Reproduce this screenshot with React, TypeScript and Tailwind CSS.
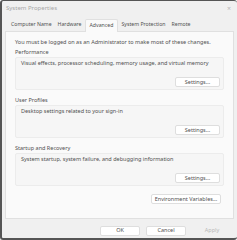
const tabs = ["Computer Name", "Hardware", "Advanced", "System Protection", "Remote"];

type Group = {
  title: string;
  description: string;
};

const groups: Group[] = [
  {
    title: "Performance",
    description: "Visual effects, processor scheduling, memory usage, and virtual memory",
  },
  {
    title: "User Profiles",
    description: "Desktop settings related to your sign-in",
  },
  {
    title: "Startup and Recovery",
    description: "System startup, system failure, and debugging information",
  },
];

function SmallButton({ label, className = "" }: { label: string; className?: string }) {
  return (
    <button
      type="button"
      className={`flex h-[10px] items-center justify-center rounded-[2px] border border-[#dedede] bg-white text-[5.5px] text-[#505050] ${className}`}
    >
      {label}
    </button>
  );
}

export default function App() {
  return (
    <div
      className="flex h-[240px] w-[237px] flex-col overflow-hidden rounded-[3px] border-b-2 border-l-2 border-t border-[#555] bg-[#f0f0f0] text-[#505050]"
      style={{ fontFamily: '"Noto Sans", "Open Sans", sans-serif' }}
    >
      <div className="flex h-[17px] shrink-0 items-center justify-between pb-[2px] pl-[4px] pr-[6px]">
        <span className="text-[6px] text-[#a8a8a8]">System Properties</span>
        <span className="text-[7px] leading-none text-[#b5b5b5]">×</span>
      </div>

      <div className="flex h-[13px] shrink-0 items-end pl-[6px]">
        {tabs.map((tab) => (
          <div
            key={tab}
            className={
              tab === "Advanced"
                ? "relative z-10 -mb-px flex h-[13px] items-center rounded-t-[2px] border border-b-0 border-[#e0e0e0] bg-[#fafafa] px-[4px] text-[5.2px]"
                : "flex h-[12px] items-center px-[3px] text-[5.2px]"
            }
          >
            {tab}
          </div>
        ))}
      </div>

      <div className="mx-[3px] flex h-[188px] shrink-0 flex-col border border-[#e0e0e0] bg-[#fafafa] px-[9px] pt-[7px]">
        <p className="text-[5.5px] leading-[7px]">
          You must be logged on as an Administrator to make most of these changes.
        </p>

        <div className="mt-[3px] flex flex-col gap-[7px]">
          {groups.map((group) => (
            <div key={group.title} className="flex flex-col">
              <span className="text-[5.5px] leading-[7px]">{group.title}</span>
              <div className="mt-[1px] flex h-[33px] flex-col rounded-[2px] border border-[#ececec] bg-[#f6f6f6] pl-[5px] pr-[3px] pt-[2px]">
                <span className="text-[5.5px] leading-[7px]">{group.description}</span>
                <div className="mt-auto mb-[2px] flex justify-end">
                  <SmallButton label="Settings..." className="w-[45px]" />
                </div>
              </div>
            </div>
          ))}
        </div>

        <div className="mt-[8px] flex justify-end pr-[3px]">
          <SmallButton label="Environment Variables..." className="w-[70px]" />
        </div>
      </div>

      <div className="flex flex-1 items-center justify-end gap-[6px] pr-[5px] pt-[4px]">
        <SmallButton label="OK" className="w-[40px]" />
        <SmallButton label="Cancel" className="w-[40px]" />
        <button
          type="button"
          className="flex h-[10px] w-[40px] items-center justify-center text-[5.5px] text-[#b8b8b8]"
        >
          Apply
        </button>
      </div>
    </div>
  );
}
